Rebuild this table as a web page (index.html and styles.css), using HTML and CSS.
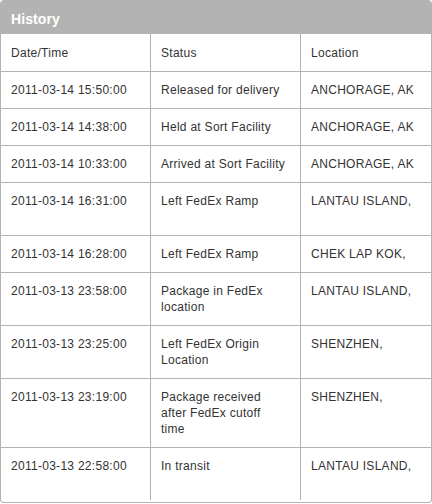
FILE: index.html
```html
<!DOCTYPE html>
<html lang="en">
<head>
<meta charset="utf-8">
<title>History</title>
<link rel="stylesheet" href="styles.css">
</head>
<body>
<section class="panel">
  <h2 class="panel-head">History</h2>
  <table class="history">
    <colgroup>
      <col class="c-date">
      <col class="c-status">
      <col class="c-loc">
    </colgroup>
    <thead>
      <tr><th>Date/Time</th><th>Status</th><th>Location</th></tr>
    </thead>
    <tbody>
      <tr><td>2011-03-14 15:50:00</td><td>Released for delivery</td><td>ANCHORAGE, AK</td></tr>
      <tr><td>2011-03-14 14:38:00</td><td>Held at Sort Facility</td><td>ANCHORAGE, AK</td></tr>
      <tr><td>2011-03-14 10:33:00</td><td>Arrived at Sort Facility</td><td>ANCHORAGE, AK</td></tr>
      <tr><td>2011-03-14 16:31:00</td><td>Left FedEx Ramp</td><td>LANTAU ISLAND,<br>&nbsp;</td></tr>
      <tr><td>2011-03-14 16:28:00</td><td>Left FedEx Ramp</td><td>CHEK LAP KOK,</td></tr>
      <tr><td>2011-03-13 23:58:00</td><td>Package in FedEx location</td><td>LANTAU ISLAND,<br>&nbsp;</td></tr>
      <tr><td>2011-03-13 23:25:00</td><td>Left FedEx Origin Location</td><td>SHENZHEN,</td></tr>
      <tr><td>2011-03-13 23:19:00</td><td>Package received after FedEx cutoff time</td><td>SHENZHEN,</td></tr>
      <tr><td>2011-03-13 22:58:00</td><td>In transit</td><td>LANTAU ISLAND,<br>&nbsp;</td></tr>
    </tbody>
  </table>
</section>
</body>
</html>
```

FILE: styles.css
```css
html, body {
  margin: 0;
  padding: 0;
  background: #ffffff;
}

body {
  font-family: "Liberation Sans", Arial, sans-serif;
  color: #333333;
}

.panel {
  box-sizing: border-box;
  width: 432px;
  height: 503px;
  border: 1px solid #b3b3b3;
  border-top: 0;
  border-radius: 4px;
  overflow: hidden;
  background: #ffffff;
}

.panel-head {
  margin: 0;
  height: 34px;
  box-sizing: border-box;
  padding: 11px 10px 7px;
  background: #b3b3b3;
  color: #ffffff;
  font-size: 14px;
  font-weight: bold;
  line-height: 16px;
  letter-spacing: 0.1px;
}

.history {
  width: 430px;
  table-layout: fixed;
  border-collapse: separate;
  border-spacing: 0;
  font-size: 12px;
  line-height: 16px;
  letter-spacing: 0.28px;
}

.c-date { width: 149px; }
.c-status { width: 150px; }
.c-loc { width: 131px; }

.history th,
.history td {
  padding: 10px 10px;
  text-align: left;
  vertical-align: top;
  font-weight: normal;
}

.history th {
  padding-top: 11px;
}

.history th + th,
.history td + td {
  border-left: 1px solid #b3b3b3;
}

.history td:nth-child(2) {
  padding-right: 14px;
}

.history tbody td {
  border-top: 1px solid #b3b3b3;
}
```
